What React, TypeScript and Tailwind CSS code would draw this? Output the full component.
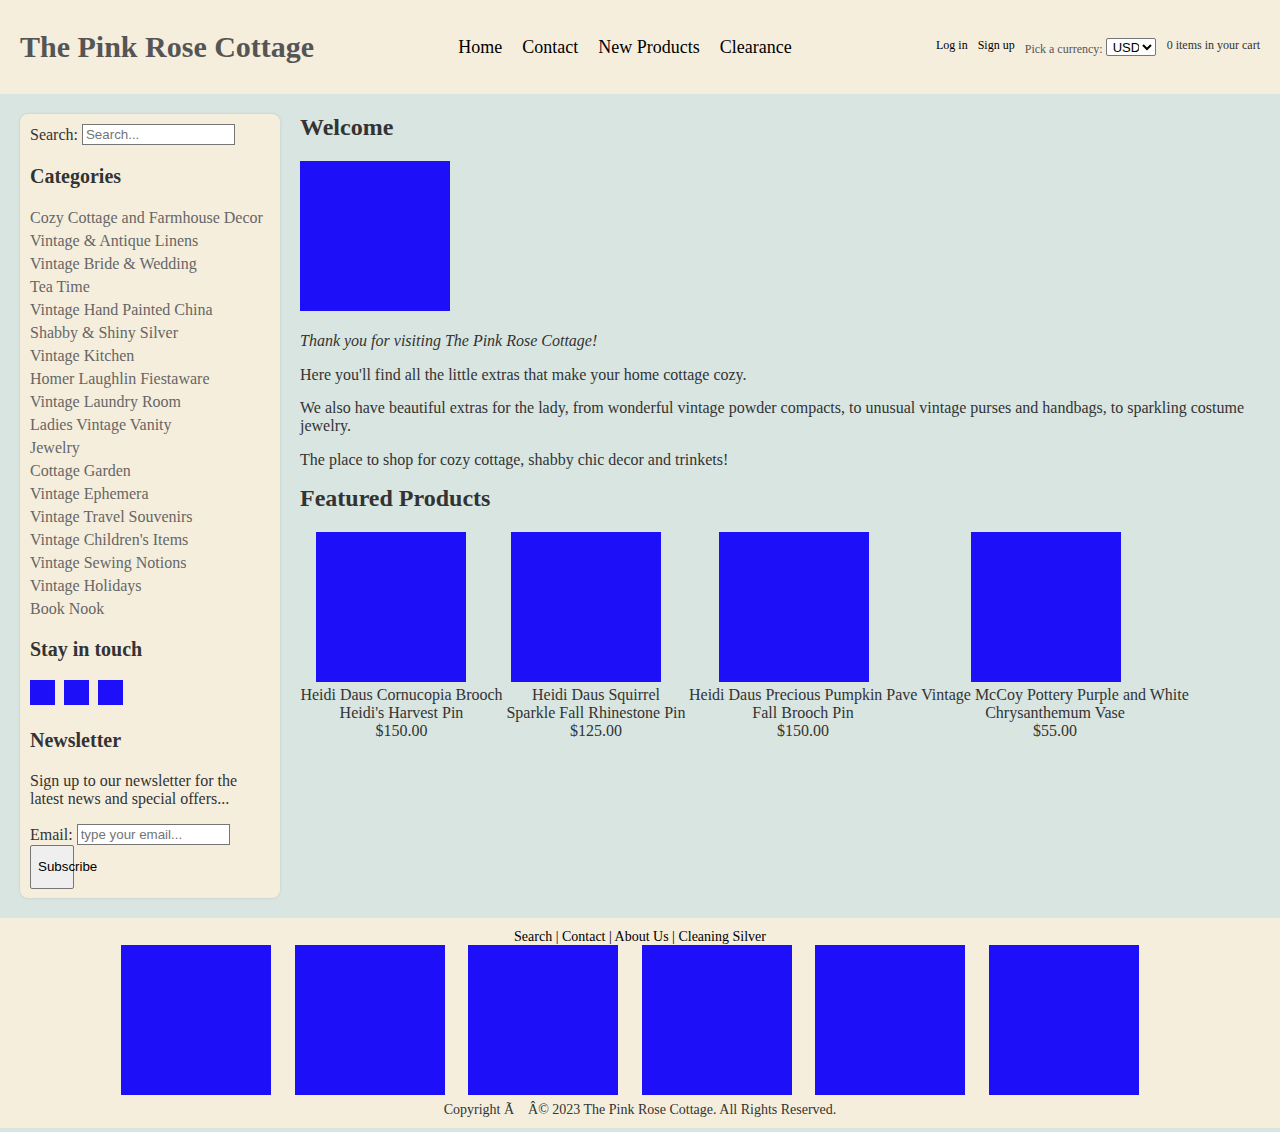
import React from "react";

const categories = [
  "Cozy Cottage and Farmhouse Decor",
  "Vintage & Antique Linens",
  "Vintage Bride & Wedding",
  "Tea Time",
  "Vintage Hand Painted China",
  "Shabby & Shiny Silver",
  "Vintage Kitchen",
  "Homer Laughlin Fiestaware",
  "Vintage Laundry Room",
  "Ladies Vintage Vanity",
  "Jewelry",
  "Cottage Garden",
  "Vintage Ephemera",
  "Vintage Travel Souvenirs",
  "Vintage Children's Items",
  "Vintage Sewing Notions",
  "Vintage Holidays",
  "Book Nook",
];

function Blue({ className }: { className: string }) {
  return <div className={"bg-[#1d10f8] shrink-0 " + className} />;
}

export default function App() {
  return (
    <div className="font-['Liberation_Serif',serif] bg-[#d9e5e1] min-h-[1132px] w-[1280px]">
      {/* Header */}
      <header className="h-[94px] bg-[#f5eedd] flex items-center justify-between px-[20px]">
        <h1 className="text-[30px] font-bold text-[#555555] leading-none">The Pink Rose Cottage</h1>
        <nav className="flex gap-[20px] text-[18px] text-black">
          <a>Home</a>
          <a>Contact</a>
          <a>New Products</a>
          <a>Clearance</a>
        </nav>
        <div className="flex items-center text-black">
          <a className="text-[12px] mr-[10px] mb-[4px]">Log in</a>
          <a className="text-[12px] mr-[10px] mb-[4px]">Sign up</a>
          <span className="text-[12px] text-[#555] mt-[3px] mr-[3px]">Pick a currency:</span>
          <select className="h-[18px] w-[50px] border border-[#767676] rounded-[2px] bg-white text-[13px] font-['Liberation_Sans',sans-serif] text-black mr-[11px] leading-none pl-[2px] pr-0">
            <option>USD</option>
          </select>
          <span className="text-[12px] text-[#333] mb-[4px]">0 items in your cart</span>
        </div>
      </header>

      {/* Main */}
      <main className="flex gap-[20px] p-[20px] h-[824px]">
        <aside className="w-[260px] shrink-0 bg-[#f5eedd] rounded-[8px] shadow-[0_0_3px_rgba(0,0,0,0.12)] pt-[10px] px-[10px] h-[784px] text-[#333]">
          <div className="flex items-center h-[21px] text-[16px]">
            <span className="mr-[4px]">Search:</span>
            <input
              placeholder="Search..."
              className="w-[153px] h-[21px] border border-[#767676] bg-white px-[3px] text-[13.33px] font-['Liberation_Sans',sans-serif] placeholder:text-[#757575] outline-none"
            />
          </div>
          <h3 className="mt-[20px] text-[20px] font-bold leading-[23px]">Categories</h3>
          <ul className="mt-[18px] text-[16px] text-[#666666]">
            {categories.map((c) => (
              <li key={c} className="leading-[23px]">
                {c}
              </li>
            ))}
          </ul>
          <h3 className="mt-[18px] text-[20px] font-bold leading-[23px]">Stay in touch</h3>
          <div className="flex gap-[9px] mt-[19px]">
            <Blue className="w-[25px] h-[25px]" />
            <Blue className="w-[25px] h-[25px]" />
            <Blue className="w-[25px] h-[25px]" />
          </div>
          <h3 className="mt-[24px] text-[20px] font-bold leading-[23px]">Newsletter</h3>
          <p className="mt-[20px] text-[16px] leading-[18px]">
            Sign up to our newsletter for the
            <br />
            latest news and special offers...
          </p>
          <div className="flex items-center h-[21px] mt-[16px] text-[16px]">
            <span className="mr-[4px]">Email:</span>
            <input
              placeholder="type your email..."
              className="w-[153px] h-[21px] border border-[#767676] bg-white px-[3px] text-[13.33px] font-['Liberation_Sans',sans-serif] placeholder:text-[#757575] outline-none"
            />
          </div>
          <button className="w-[44px] h-[44px] bg-[#efefef] border border-[#767676] rounded-[2px] text-[13.33px] font-['Liberation_Sans',sans-serif] text-black whitespace-nowrap text-left pl-[7px] overflow-visible">
            Subscribe
          </button>
        </aside>

        <section className="flex-1 text-[#333] text-[16px]">
          <h2 className="text-[24px] font-bold leading-[27px]">Welcome</h2>
          <Blue className="w-[150px] h-[150px] mt-[20px]" />
          <p className="italic mt-[21px] leading-[18px]">Thank you for visiting The Pink Rose Cottage!</p>
          <p className="mt-[16px] leading-[18px]">Here you'll find all the little extras that make your home cottage cozy.</p>
          <p className="mt-[15px] leading-[18px]">
            We also have beautiful extras for the lady, from wonderful vintage powder compacts, to unusual vintage purses and handbags, to sparkling costume jewelry.
          </p>
          <p className="mt-[16px] leading-[18px]">The place to shop for cozy cottage, shabby chic decor and trinkets!</p>
          <h2 className="mt-[15px] text-[24px] font-bold leading-[28px]">Featured Products</h2>
          <div className="flex mt-[20px]">
            <div className="w-[203px]">
              <Blue className="w-[150px] h-[150px] ml-[16px]" />
              <div className="mt-[4px] text-center leading-[18px] whitespace-nowrap">
                Heidi Daus Cornucopia Brooch
                <br />
                Heidi's Harvest Pin
                <br />
                $150.00
              </div>
            </div>
            <div className="w-[186px]">
              <Blue className="w-[150px] h-[150px] ml-[8px]" />
              <div className="mt-[4px] text-center leading-[18px] whitespace-nowrap">
                Heidi Daus Squirrel
                <br />
                Sparkle Fall Rhinestone Pin
                <br />
                $125.00
              </div>
            </div>
            <div className="w-[228px]">
              <Blue className="w-[150px] h-[150px] ml-[30px]" />
              <div className="mt-[4px] text-center leading-[18px] whitespace-nowrap">
                Heidi Daus Precious Pumpkin Pave
                <br />
                Fall Brooch Pin
                <br />
                $150.00
              </div>
            </div>
            <div className="w-[276px]">
              <Blue className="w-[150px] h-[150px] ml-[54px]" />
              <div className="mt-[4px] text-center leading-[18px] whitespace-nowrap">
                Vintage McCoy Pottery Purple and White
                <br />
                Chrysanthemum Vase
                <br />
                $55.00
              </div>
            </div>
          </div>
        </section>
      </main>

      {/* Footer */}
      <footer className="bg-[#f5eedd] h-[210px] pt-[10px] flex flex-col items-center">
        <div className="text-[14px] leading-[17px] text-black">
          <a>Search</a> | <a>Contact</a> | <a>About Us</a> | <a>Cleaning Silver</a>
        </div>
        <div className="flex gap-[23.6px] pr-[20px]">
          <Blue className="w-[150px] h-[150px]" />
          <Blue className="w-[150px] h-[150px]" />
          <Blue className="w-[150px] h-[150px]" />
          <Blue className="w-[150px] h-[150px]" />
          <Blue className="w-[150px] h-[150px]" />
          <Blue className="w-[150px] h-[150px]" />
        </div>
        <div className="mt-[7px] text-[14px] leading-[16px] text-[#333] whitespace-pre">
          Copyright Ã    Â© 2023 The Pink Rose Cottage. All Rights Reserved.
        </div>
      </footer>
    </div>
  );
}
